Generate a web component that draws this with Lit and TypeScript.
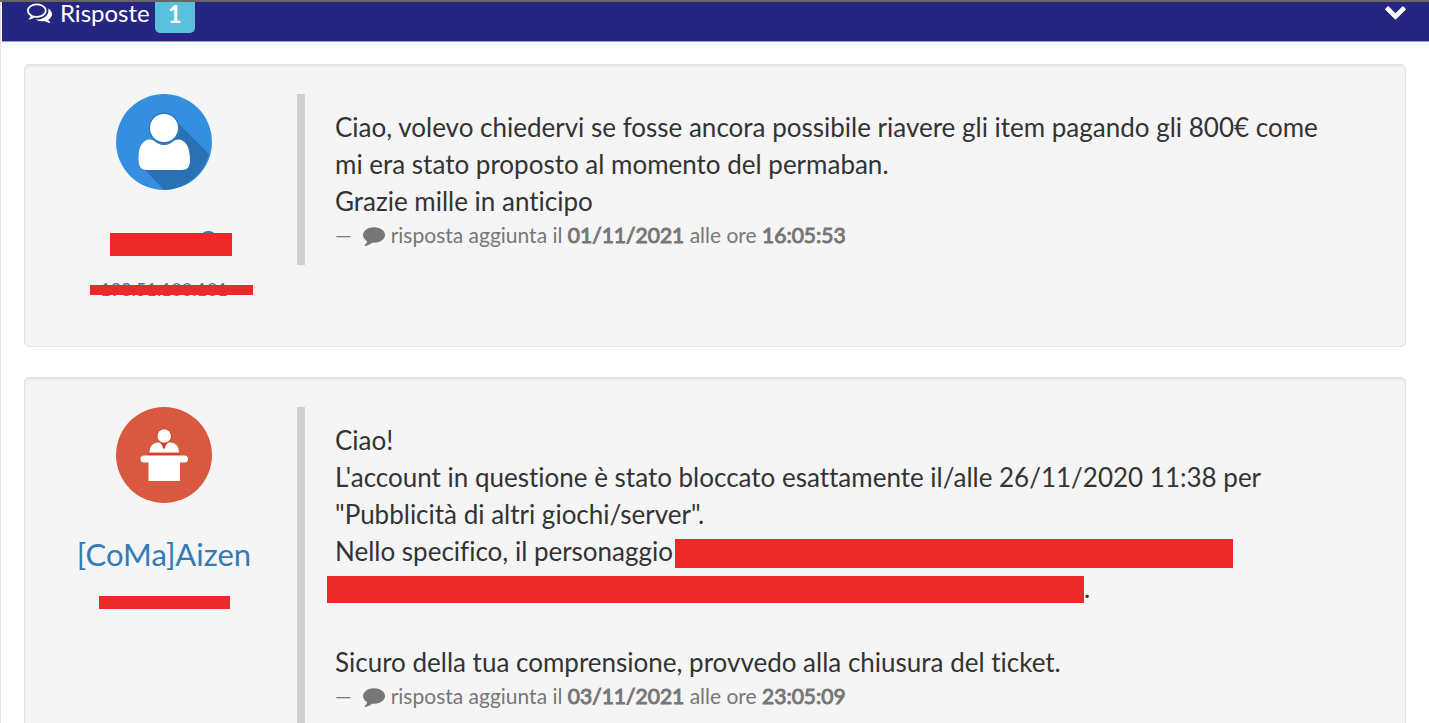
import { LitElement, html, css, svg } from "lit";
import { customElement, property } from "lit/decorators.js";

const commentsIcon = svg`<path fill="currentColor" d="M704 384q-153 0-286 52t-211.5 141-78.5 191q0 82 53 158t149 132l97 56-35 84q34-20 62-39l44-31 53 10q78 14 153 14 153 0 286-52t211.5-141 78.5-191-78.5-191-211.5-141-286-52zm0-128q191 0 353.5 68.5t256.5 186.5 94 257-94 257-256.5 186.5-353.5 68.5q-86 0-176-16-124 88-278 128-36 9-86 16h-3q-11 0-20.5-8t-11.5-21q-1-3-1-6.5t.5-6.5 2-6l2.5-5 3.5-5.5 4-5 4.5-5 4-4.5q5-6 23-25t26-29.5 22.5-29 25-38.5 20.5-44q-124-72-195-177t-71-224q0-139 94-257t256.5-186.5 353.5-68.5zm822 1169q10 24 20.5 44t25 38.5 22.5 29 26 29.5 23 25q1 1 4 4.5t4.5 5 4 5 3.5 5.5l2.5 5 2 6 .5 6.5-1 6.5q-3 14-13 22t-22 7q-50-7-86-16-154-40-278-128-90 16-176 16-271 0-472-132 58 4 88 4 161 0 309-45t264-129q125-92 192-212t67-254q0-77-23-152 129 71 204 178t75 230q0 120-71 224.5t-195 176.5z"/>`;
const commentIcon = svg`<path fill="currentColor" d="M1792 896q0 174-120 321.5t-326 233-450 85.5q-70 0-145-8-198 175-460 242-49 14-114 22-17 2-30.5-9t-17.5-29v-1q-3-4-.5-12t2-10 4.5-9.5l6-9 7-8.5 8-9q7-8 31-34.5t34.5-38 31-39.5 32.5-51 27-59 26-76q-157-89-247.5-220t-90.5-281q0-130 71-248.5t191-204.5 286-136.5 348-50.5q244 0 450 85.5t326 233 120 321.5z"/>`;
const chevronIcon = svg`<path fill="currentColor" d="M1683 808l-742 741q-19 19-45 19t-45-19l-742-741q-19-19-19-45.5t19-45.5l166-165q19-19 45-19t45 19l531 531 531-531q19-19 45-19t45 19l166 165q19 19 19 45.5t-19 45.5z"/>`;

const userAvatar = html`<svg class="avatar" viewBox="0 0 96 96" aria-hidden="true">
  <circle cx="48" cy="48" r="48" fill="#368ee0" />
  <path fill="#2a71b3" d="M60 27L93 60A48 48 0 0 1 48 96L27 74Z" />
  <path fill="#fff" d="M22.500 64C22.500 52 27 45.500 34 45.500C39 45.500 41 51 48 51C55 51 57 45.500 62 45.500C69 45.500 74 52 74 66C74 73 71 76 66 76H31C25 76 22.500 73 22.500 64Z" />
  <ellipse cx="48" cy="34.500" rx="15.500" ry="16" fill="#2d7ac2" />
  <ellipse cx="48" cy="34" rx="14" ry="14" fill="#fff" />
</svg>`;

const staffAvatar = html`<svg class="avatar" viewBox="0 0 96 96" aria-hidden="true">
  <circle cx="48" cy="48" r="48" fill="#d85840" />
  <path fill="#d5391f" d="M32.500 46.500H64V48.500H32.500ZM44 36H52L48 43Z" />
  <g fill="#fff">
    <path d="M33.500 45.500C33.500 39 37.500 35.500 42 35.500C45 35.500 46.500 38 47 41.500H49C49.500 38 51 35.500 54 35.500C59.500 35.500 63 39 63 45.500Z" />
    <circle cx="48.200" cy="29" r="7.500" fill="#d5391f" />
    <circle cx="48.200" cy="29" r="6.800" />
    <path d="M28 48.500H68.500A3.500 3.500 0 0 1 68.500 55.500H64V74H32.500V55.500H28A3.500 3.500 0 0 1 28 48.500Z" />
  </g>
</svg>`;

@customElement("ticket-reply")
class TicketReply extends LitElement {
  @property() date = "";
  @property() time = "";

  static styles = css`
    :host {
      display: flex;
      align-items: flex-start;
      gap: 23px;
      padding: 29px;
      background: #f5f5f5;
      border: 1px solid #e3e3e3;
      border-radius: 5px;
      box-shadow: inset 0 2px 2px rgba(0, 0, 0, 0.05);
    }
    .author {
      flex: 0 0 220px;
      padding-bottom: 17px;
      display: flex;
      flex-direction: column;
      align-items: center;
    }
    .quote {
      flex: 1;
      min-width: 0;
      margin: 0;
      padding: 15px 30px;
      border-left: 8px solid #d0d0d0;
    }
    .meta {
      display: flex;
      align-items: center;
      font-size: 21px;
      line-height: 30px;
      color: #777;
    }
    .icon {
      width: 22px;
      height: 22px;
      margin: 0 6px 0 11px;
    }
    .when {
      white-space: pre-wrap;
    }
    .stamp {
      font-weight: 400;
      -webkit-text-stroke: 1px currentColor;
    }
  `;

  render() {
    return html`
      <div class="author"><slot name="author"></slot></div>
      <blockquote class="quote">
        <slot></slot>
        <footer class="meta">
          <span>—</span>
          <svg class="icon" viewBox="0 0 1792 1792" aria-hidden="true">${commentIcon}</svg>
          <span class="when">risposta aggiunta il <b class="stamp">${this.date}</b> alle ore <b class="stamp">${this.time}</b></span>
        </footer>
      </blockquote>
    `;
  }
}

@customElement("app-root")
class AppRoot extends LitElement {
  static styles = css`
    :host {
      display: block;
      box-sizing: border-box;
      min-height: 100vh;
      border-top: 2px solid #666;
      background: #fff;
      color: #333;
      font-family: Lato, "Liberation Sans", sans-serif;
      font-size: 26px;
      font-variant-ligatures: none;
      line-height: 37px;
    }
    .panel {
      border-left: 1px solid #e6e0ea;
      padding-left: 1px;
    }
    .heading {
      display: flex;
      align-items: flex-start;
      padding: 0 22px 8px 25px;
      background: #262680;
      border-bottom: 1px solid #5bb5dc;
      color: #fff;
    }
    .title {
      margin: 0 5px 0 8px;
      font-size: 24px;
      font-weight: 400;
      line-height: 22px;
    }
    .comments {
      width: 25px;
      height: 24px;
    }
    .badge {
      padding: 0 13px 7px;
      border-radius: 0 0 5px 5px;
      background: #5bc0de;
      font-size: 24px;
      font-weight: 700;
      line-height: 24px;
    }
    .toggle {
      display: flex;
      margin-left: auto;
      padding: 0;
      border: 0;
      background: none;
      color: inherit;
      cursor: pointer;
    }
    .chevron {
      width: 23px;
      height: 23px;
    }
    .replies {
      display: flex;
      flex-direction: column;
      gap: 30px;
      padding: 22px 23px 30px 22px;
    }
    .avatar {
      display: block;
      width: 96px;
      height: 96px;
      margin-bottom: 34px;
    }
    .name,
    .address {
      display: grid;
      place-items: center;
      color: #337ab7;
      text-decoration: none;
    }
    .name {
      margin-bottom: 19px;
      font-size: 31px;
      line-height: 35px;
    }
    .address {
      font-size: 18px;
      line-height: 22px;
      height: 22px;
    }
    .covered > * {
      grid-area: 1 / 1;
    }
    .mask {
      background: #ec2828;
    }
    .mask-name {
      width: 122px;
      height: 23px;
      margin: 6px 0 0 14px;
    }
    .mask-address {
      width: 163px;
      height: 10px;
      margin: 2px 0 0 14px;
    }
    .mask-staff {
      width: 131px;
      height: 13px;
    }
    .text {
      margin: 0;
    }
    .row {
      display: flex;
      align-items: center;
    }
    .mask-first {
      flex: 0 1 558px;
      height: 29px;
      margin: 4px 0 0 2px;
    }
    .mask-second {
      flex: 0 1 757px;
      height: 27px;
      margin: 2px 0 0 -8px;
    }
  `;

  render() {
    return html`
      <section class="panel">
        <header class="heading">
          <svg class="comments" viewBox="0 180 1792 1664" aria-hidden="true">${commentsIcon}</svg>
          <h2 class="title">Risposte</h2>
          <span class="badge">1</span>
          <button class="toggle" type="button" aria-label="Comprimi">
            <svg class="chevron" viewBox="90 200 1612 1792" aria-hidden="true">${chevronIcon}</svg>
          </button>
        </header>
        <div class="replies">
          <ticket-reply date="01/11/2021" time="16:05:53">
            <div slot="author">${userAvatar}</div>
            <a slot="author" class="name covered" href="#"><span>oooooS</span><span class="mask mask-name"></span></a>
            <a slot="author" class="address covered" href="#"><span>198.51.100.101</span><span class="mask mask-address"></span></a>
            <p class="text">Ciao, volevo chiedervi se fosse ancora possibile riavere gli item pagando gli 800€ come mi era stato proposto al momento del permaban.<br />Grazie mille in anticipo</p>
          </ticket-reply>
          <ticket-reply date="03/11/2021" time="23:05:09">
            <div slot="author">${staffAvatar}</div>
            <a slot="author" class="name" href="#">[CoMa]Aizen</a>
            <div slot="author" class="address"><span class="mask mask-staff"></span></div>
            <p class="text">Ciao!<br />L'account in questione è stato bloccato esattamente il/alle 26/11/2020 11:38 per "Pubblicità di altri giochi/server".</p>
            <div class="row">Nello specifico, il personaggio<span class="mask mask-first"></span></div>
            <div class="row"><span class="mask mask-second"></span>.</div>
            <p class="text"><br />Sicuro della tua comprensione, provvedo alla chiusura del ticket.</p>
          </ticket-reply>
        </div>
      </section>
    `;
  }
}
